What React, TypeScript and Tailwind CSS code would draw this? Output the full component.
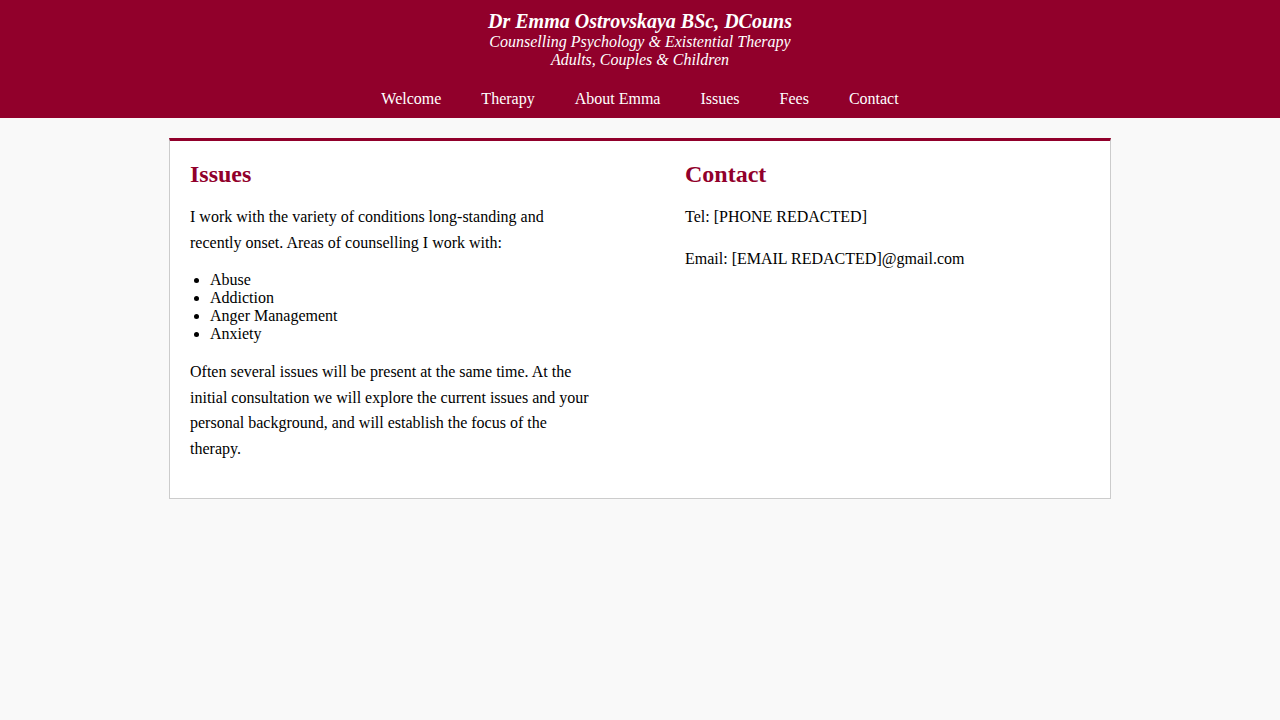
export default function App() {
  const nav = ["Welcome", "Therapy", "About Emma", "Issues", "Fees", "Contact"];
  const issues = ["Abuse", "Addiction", "Anger Management", "Anxiety"];

  return (
    <div
      className="min-h-[720px] bg-[#f9f9f9] text-black"
      style={{ fontFamily: '"Liberation Serif", "Times New Roman", serif' }}
    >
      {/* Header */}
      <header className="bg-[#91002b] pt-[9px] text-white">
        <div className="text-center italic">
          <div className="text-[20px] font-bold leading-[24px]">
            Dr Emma Ostrovskaya BSc, DCouns
          </div>
          <div className="text-[16px] leading-[18px]">
            Counselling Psychology &amp; Existential Therapy
          </div>
          <div className="text-[16px] leading-[18px]">
            Adults, Couples &amp; Children
          </div>
        </div>
        <nav className="mt-[10px] flex justify-center">
          {nav.map((item) => (
            <a key={item} className="px-5 text-[16px] leading-[39px]">
              {item}
            </a>
          ))}
        </nav>
      </header>

      {/* Content card */}
      <main className="mx-auto mt-5 w-[942px] border border-t-[3px] border-[#cccccc] border-t-[#91002b] bg-white px-5 pb-5">
        <div className="grid grid-cols-[400px_410px] gap-x-[95px]">
          <section>
            <h2 className="mt-[19px] text-[24px] font-bold leading-[28px] text-[#91002b]">
              Issues
            </h2>
            <p className="mt-4 text-[16px] leading-[26px]">
              I work with the variety of conditions long-standing and recently
              onset. Areas of counselling I work with:
            </p>
            <ul className="mt-[15px] list-disc pl-5 text-[16px] leading-[18px]">
              {issues.map((i) => (
                <li key={i}>{i}</li>
              ))}
            </ul>
            <p className="mt-[16px] mb-4 text-[16px] leading-[25.7px]">
              Often several issues will be present at the same time. At the
              initial consultation we will explore the current issues and your
              personal background, and will establish the focus of the therapy.
            </p>
          </section>
          <section>
            <h2 className="mt-[19px] text-[24px] font-bold leading-[28px] text-[#91002b]">
              Contact
            </h2>
            <p className="mt-4 text-[16px] leading-[26px]">
              Tel: [PHONE REDACTED]
            </p>
            <p className="mt-4 text-[16px] leading-[26px]">
              Email: [EMAIL REDACTED]@gmail.com
            </p>
          </section>
        </div>
      </main>
    </div>
  );
}
